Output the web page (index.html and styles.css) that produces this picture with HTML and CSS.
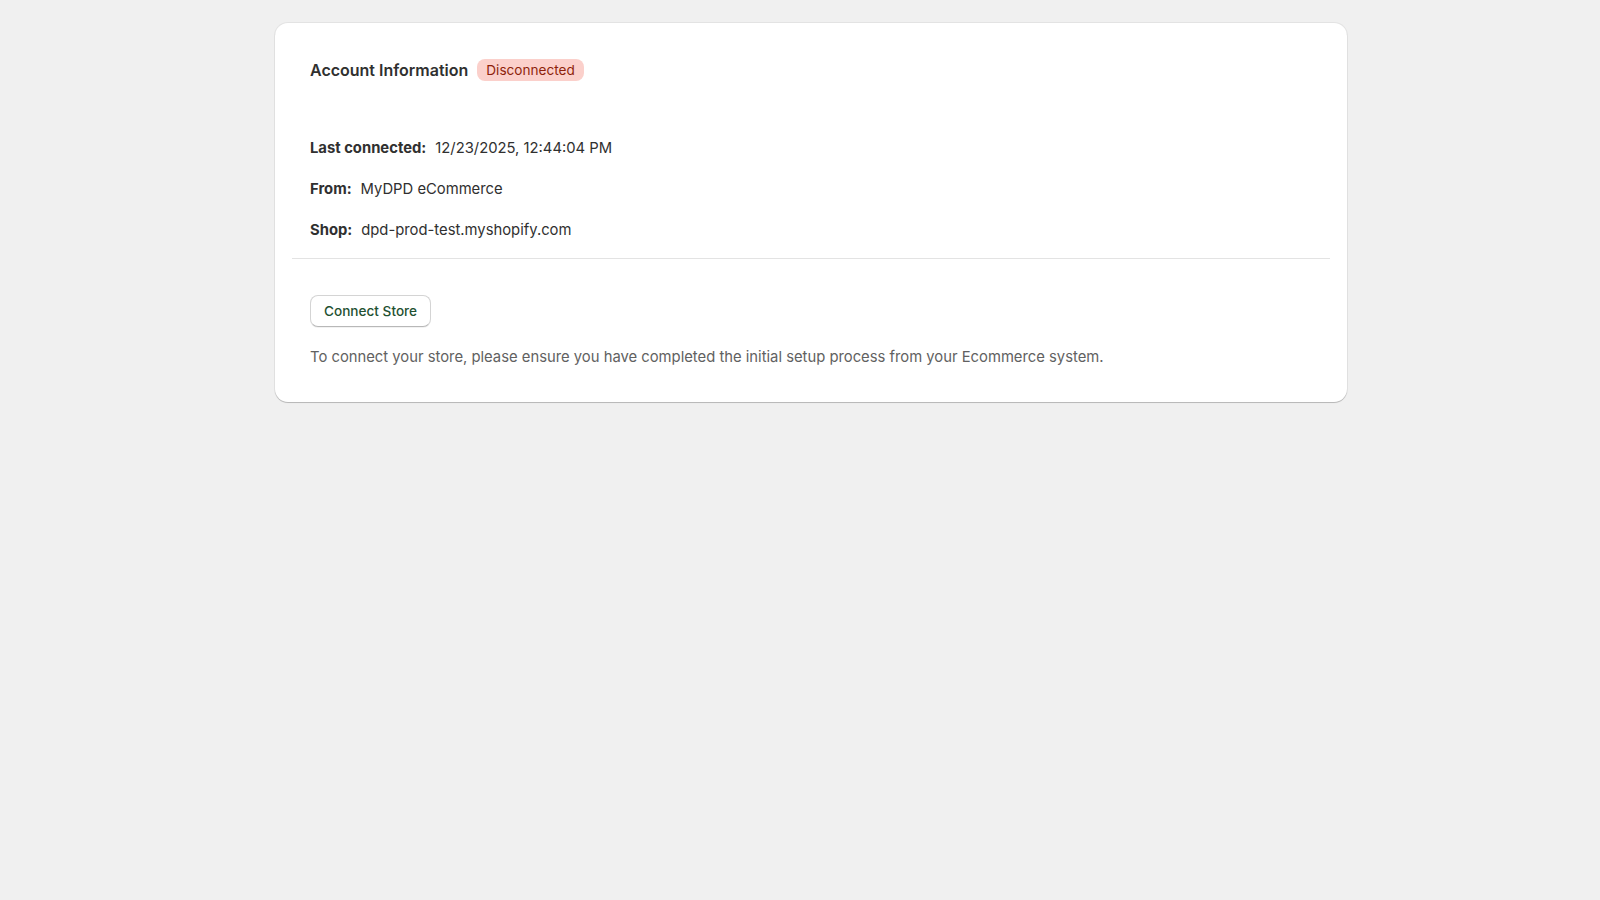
FILE: index.html
```html
<!DOCTYPE html>
<html lang="en">
<head>
<meta charset="utf-8">
<title>Account Information</title>
<link rel="stylesheet" href="styles.css">
</head>
<body>
<main class="page">
  <section class="card">
    <div class="section">
      <div class="header">
        <h2 class="title">Account Information</h2>
        <span class="badge">Disconnected</span>
      </div>
      <dl class="details">
        <div class="row"><dt>Last connected:</dt><dd>12/23/2025, 12:44:04 PM</dd></div>
        <div class="row"><dt>From:</dt><dd>MyDPD eCommerce</dd></div>
        <div class="row"><dt>Shop:</dt><dd>dpd-prod-test.myshopify.com</dd></div>
      </dl>
    </div>
    <hr class="divider">
    <div class="section section-actions">
      <button class="btn" type="button">Connect Store</button>
      <p class="hint">To connect your store, please ensure you have completed the initial setup process from your Ecommerce system.</p>
    </div>
  </section>
</main>
</body>
</html>
```
FILE: styles.css
```css
* { box-sizing: border-box; }
html, body { margin: 0; padding: 0; }
body {
  background: #f0f0f0;
  font-family: Inter, "Noto Sans", "Liberation Sans", sans-serif;
  font-size: 14.8px;
  color: #303030;
  width: 1600px;
  height: 900px;
}
.page {
  padding: 23px 0 0 275px;
}
.card {
  width: 1072px;
  background: #ffffff;
  border-radius: 13px;
  padding: 17px;
  box-shadow: 0 0 0 1px rgba(0,0,0,0.05), 0 1px 1px 0 rgba(0,0,0,0.12), 0 1px 0 0 rgba(0,0,0,0.08);
}
.section {
  padding: 18px 18px 18px;
}
.header {
  display: flex;
  align-items: center;
  gap: 9px;
  height: 24px;
}
.title {
  margin: 0;
  font-size: 16px;
  font-weight: 600;
  color: #303030;
}
.badge {
  display: inline-flex;
  align-items: center;
  height: 22.5px;
  padding: 0 9px;
  border-radius: 8px;
  background: #fbd0cb;
  color: #8e1f0b;
  font-size: 13.6px;
  font-weight: 400;
}
.details {
  margin: 56px 0 0;
  display: flex;
  flex-direction: column;
  gap: 21px;
}
.row {
  display: flex;
  gap: 9px;
  line-height: 20px;
}
.row dt {
  font-weight: 650;
}
.row dd {
  margin: 0;
}
.divider {
  margin: 0;
  border: 0;
  border-top: 1px solid #e3e3e3;
}
.section-actions {
  padding: 36px 18px 18px;
}
.btn {
  display: block;
  height: 32px;
  padding: 0 13px;
  font-family: inherit;
  font-size: 13.6px;
  font-weight: 550;
  color: #1f5132;
  background: #ffffff;
  border: 1px solid #d4d4d4;
  border-bottom-color: #b8b8b8;
  border-radius: 8px;
  box-shadow: 0 1px 0 rgba(0,0,0,0.05);
}
.hint {
  margin: 20px 0 0;
  line-height: 20px;
  color: #616161;
}
```
